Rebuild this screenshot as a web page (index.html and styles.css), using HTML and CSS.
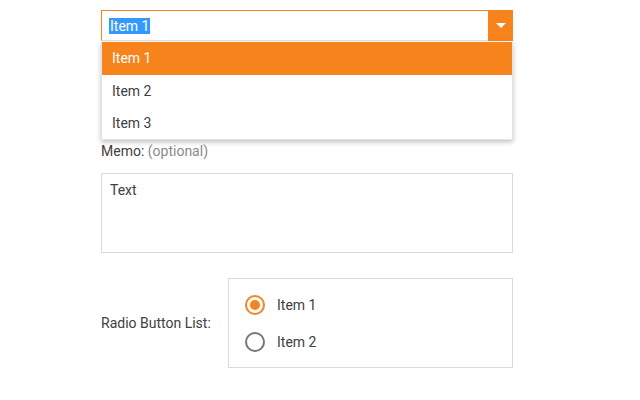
FILE: index.html
```html
<!DOCTYPE html>
<html>
<head>
<meta charset="utf-8">
<link rel="stylesheet" href="styles.css">
</head>
<body>
<div class="form">
  <div class="combo">
    <div class="combo-input"><span class="sel">Item 1</span></div>
    <div class="combo-btn"><span class="arrow"></span></div>
    <ul class="popup">
      <li class="item active">Item 1</li>
      <li class="item">Item 2</li>
      <li class="item">Item 3</li>
    </ul>
  </div>
  <div class="memo-label">Memo: <span class="opt">(optional)</span></div>
  <div class="memo">Text</div>
  <div class="radio-row">
    <div class="radio-label">Radio Button List:</div>
    <div class="radio-box">
      <div class="radio"><span class="circle checked"></span><span>Item 1</span></div>
      <div class="radio"><span class="circle"></span><span>Item 2</span></div>
    </div>
  </div>
</div>
</body>
</html>
```
FILE: styles.css
```css
html, body {
  margin: 0;
  padding: 0;
  background: #ffffff;
}
body {
  font-family: Roboto, "Liberation Sans", sans-serif;
  font-size: 14px;
  color: #404040;
}
.form {
  width: 412px;
  padding: 10px 0 0 101px;
}
.combo {
  position: relative;
  display: flex;
  height: 31px;
}
.combo-input {
  flex: 1;
  box-sizing: border-box;
  border: 1px solid #f7831c;
  border-right: none;
  border-bottom-color: #e2e2e2;
  display: flex;
  align-items: center;
  padding-left: 7px;
}
.sel {
  background: #3399ff;
  color: #ffffff;
  line-height: 16px;
  padding: 0 1px;
}
.combo-btn {
  width: 25px;
  background: #f7831c;
  display: flex;
  align-items: center;
  justify-content: center;
}
.arrow {
  width: 0;
  height: 0;
  border-left: 5px solid transparent;
  border-right: 5px solid transparent;
  border-top: 5px solid #ffffff;
}
.popup {
  position: absolute;
  left: 0;
  right: 0;
  top: 32px;
  margin: 0;
  padding: 0;
  list-style: none;
  background: #ffffff;
  box-shadow: 0 2px 5px rgba(0, 0, 0, 0.25);
  border: 1px solid #e4e4e4;
  border-top: none;
  z-index: 5;
}
.item {
  height: 32px;
  line-height: 32px;
  padding-left: 10px;
}
.item.active {
  background: #f7831c;
  color: #ffffff;
  height: 33px;
  line-height: 33px;
}
.memo-label {
  margin-top: 102px;
  line-height: 16px;
}
.opt {
  color: #8a8a8a;
}
.memo {
  margin-top: 14px;
  height: 80px;
  box-sizing: border-box;
  border: 1px solid #dadada;
  padding: 8px 8px;
  line-height: 16px;
}
.radio-row {
  margin-top: 25px;
  display: flex;
  align-items: center;
}
.radio-label {
  width: 127px;
}
.radio-box {
  flex: 1;
  box-sizing: border-box;
  border: 1px solid #dadada;
  padding: 7px 16px;
}
.radio {
  height: 37px;
  display: flex;
  align-items: center;
  gap: 12px;
}
.circle {
  width: 20px;
  height: 20px;
  box-sizing: border-box;
  border: 2px solid #777777;
  border-radius: 50%;
  display: flex;
  align-items: center;
  justify-content: center;
}
.circle.checked {
  border-color: #f7831c;
}
.circle.checked::after {
  content: "";
  width: 10px;
  height: 10px;
  border-radius: 50%;
  background: #f7831c;
}
```
